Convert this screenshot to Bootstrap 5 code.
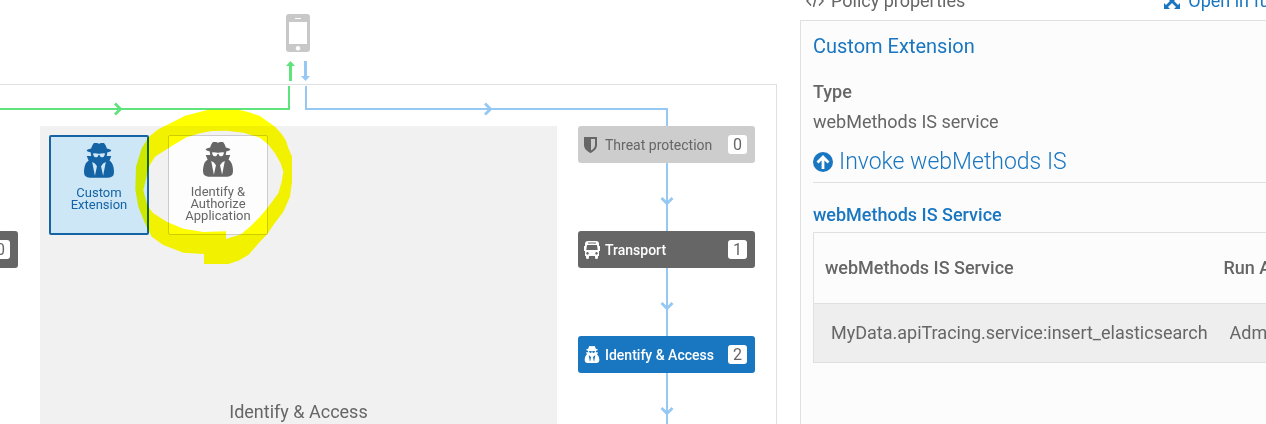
<!DOCTYPE html>
<html lang="en">
<head>
<meta charset="utf-8">
<meta name="viewport" content="width=device-width, initial-scale=1">
<title>Policy properties</title>
<link href="https://cdn.jsdelivr.net/npm/bootstrap@5.3.0/dist/css/bootstrap.min.css" rel="stylesheet">
<script src="https://cdn.jsdelivr.net/npm/bootstrap@5.3.0/dist/js/bootstrap.bundle.min.js"></script>
<style>
  :root { --ink: #666; --brand: #1976c1; --rule: #e0e0e0; --request: #95c8f2; --response: #5ee37d; }
  body { font-family: Roboto, "Liberation Sans", sans-serif; font-size: 18px; line-height: 24px; color: var(--ink); }
  a { color: var(--brand); text-decoration: none; }
  svg { display: block; flex-shrink: 0; }

  .client { flex: 0 0 84px; padding: 14px 221px 0 40px; gap: 9px; }
  .frame { border: solid var(--rule); border-width: 1px 1px 0 0; }
  .wires { display: grid; grid-template-columns: 40px 1fr 15px 1fr 111px 108px; height: 41px; padding-top: 1px; }
  .wire { height: 24px; position: relative; }
  .wire-response { grid-column: 1 / 3; margin-right: 1px; border: solid var(--response); border-width: 0 2px 2px 0; color: var(--response); }
  .wire-request { grid-column: 4 / 6; margin-left: -1px; border: solid var(--request); border-width: 0 0 2px 2px; color: var(--request); }
  .wire-head { position: absolute; bottom: -8px; left: 50%; transform: translateX(-50%); }
  .wire-response .wire-head { left: 41%; }
  .wire-drop { grid-column: 6; height: 18px; margin: 22px 0 0 -2px; border-left: 2px solid var(--request); }

  .lanes { padding-right: 21px; }
  .lane-left { width: 18px; margin-right: 22px; padding-top: 105px; }
  .stage { background: #f1f1f1; padding: 9px 9px 17px; margin-right: 21px; }
  .lane-right { width: 177px; }
  .step { height: 37px; width: 100%; border: 0; border-radius: 3px; padding: 0 8px 0 6px; font-size: 14px; line-height: 20px; font-weight: 500; color: #fff; background: var(--ink); }
  .step-idle { background: #cdcdcd; color: var(--ink); font-weight: 400; }
  .step-active { background: var(--brand); }
  .step-icon { width: 16px; margin-right: 5px; }
  .count { width: 19px; height: 19px; border-radius: 3px; background: #fff; color: var(--ink); font-size: 16px; line-height: 19px; font-weight: 400; text-align: center; flex-shrink: 0; }
  .link-down { height: 68px; width: 14px; color: var(--request); background: linear-gradient(var(--request), var(--request)) center / 2px 100% no-repeat; }

  .tile { width: 100px; height: 100px; padding: 6px 0 0; border: 1px solid #ccc; border-radius: 2px; background: #fdfdfd; color: var(--ink); font-size: 13px; line-height: 12px; gap: 9px; }
  .tile-on { border: 2px solid #1464a5; background: #cde7f7; color: #1464a5; }
  .tiles { gap: 19px; }
  .marker { position: absolute; left: -34px; top: -27px; mix-blend-mode: multiply; pointer-events: none; }

  .side { flex: 0 0 466px; margin-left: 23px; }
  .side-head { height: 20px; padding: 0 0 7px 6px; }
  .side-name { gap: 7px; }
  .side-link { margin-left: 199px; gap: 8px; }
  .props { background: #fcfcfc; border: solid var(--rule); border-width: 1px 0 0 1px; padding: 13px 0 0 12px; }
  .props-title { font-size: 20px; line-height: 24px; color: var(--brand); margin: 0 0 22px; font-weight: 400; }
  .props-label { font-weight: 500; margin-bottom: 6px; }
  .group-title { font-size: 23px; line-height: 32px; font-weight: 300; color: var(--brand); gap: 6px; padding-bottom: 4px; margin: 12px 0 20px; border-bottom: 1px solid var(--rule); }
  .sub-title { font-size: 18px; line-height: 24px; font-weight: 500; color: var(--brand); margin: 0 0 5px; }
  .svc { width: 580px; table-layout: fixed; border: 1px solid var(--rule); margin: 0; color: var(--ink); }
  .svc th { font-weight: 500; padding: 23px 11px; }
  .svc td { padding: 17px; border-top: 1px solid var(--rule); background: #eee; }
  .svc-name { width: 399px; }
</style>
</head>
<body class="vh-100 overflow-hidden d-flex">

<svg width="0" height="0" class="position-absolute" aria-hidden="true">
  <symbol id="agent" viewBox="0 0 1408 1640">
    <path fill="currentColor" d="M512 1536l96-448-96-128-128-64zm384 0l128-640-128 64-96 128zm96-1040q-2-4-4-6-10-8-96-8-70 0-167 19-7 2-21 2t-21-2q-97-19-167-19-86 0-96 8-2 2-4 6 2 18 4 27 2 3 7.500 6.500t7.500 10.500q2 4 7.500 20.500t7 20.500 7.500 17 8.500 17 9 14 12 13.500 14 9.500 17.500 8 20.500 4 24.500 2q36 0 59-12.500t32.500-30 14.500-34.500 11.500-29.500 17.500-12.500h12q11 0 17.500 12.500t11.500 29.500 14.500 34.500 32.500 30 59 12.500q13 0 24.500-2t20.500-4 17.500-8 14-9.500 12-13.500 9-14 8.500-17 7.500-17 7-20.500 7.500-20.500q2-7 7.500-10.500t7.500-6.500q2-9 4-27zm416 879q0 121-73 190t-194 69h-874q-121 0-194-69t-73-190q0-61 4.500-118t19-125.500 37.500-123.500 63.500-103.500 93.500-74.500l-90-220h214q-22-64-22-128 0-12 2-32-194-40-194-96 0-57 210-99 17-62 51.500-134t70.500-114q32-37 76-37 30 0 84 31t84 31 84-31 84-31q44 0 76 37 36 42 70.500 114t51.500 134q210 42 210 99 0 56-194 96 7 81-20 160h214l-82 225q63 33 107.500 96.500t65.500 143.500 29 151.500 8 148.500z"/>
  </symbol>
  <symbol id="chevron-down" viewBox="0 0 14 10">
    <path d="M1.500 2L7 7.500L12.500 2" fill="none" stroke="currentColor" stroke-width="2.800"/>
  </symbol>
  <symbol id="chevron-right" viewBox="0 0 10 14">
    <path d="M2 1.500L7.500 7L2 12.500" fill="none" stroke="currentColor" stroke-width="2.800"/>
  </symbol>
</svg>

<main class="flex-fill d-flex flex-column">
  <div class="client d-flex flex-column align-items-center">
    <svg width="24" height="38" viewBox="0 0 24 38" aria-label="Client">
      <path fill="#c8c8c8" fill-rule="evenodd" d="M3 0h18a3 3 0 0 1 3 3v32a3 3 0 0 1-3 3H3a3 3 0 0 1-3-3V3a3 3 0 0 1 3-3zM3 8v22h18V8zM9 4v1h6V4zM12 32a2.300 2.300 0 1 0 .01 0z"/>
    </svg>
    <svg width="24" height="20" viewBox="0 0 24 20" aria-hidden="true">
      <path fill="#5ee37d" d="M4.500 0L9 5H6v15H3V5H0z"/>
      <path fill="#95c8f2" d="M18 0h3v15h3l-4.500 5L15 15h3z"/>
    </svg>
  </div>

  <section class="frame flex-fill d-flex flex-column">
    <div class="wires">
      <div class="wire wire-response"><svg class="wire-head" width="10" height="14"><use href="#chevron-right"/></svg></div>
      <div class="wire wire-request"><svg class="wire-head" width="10" height="14"><use href="#chevron-right"/></svg></div>
      <div class="wire-drop"></div>
    </div>

    <div class="lanes flex-fill d-flex">
      <div class="lane-left">
        <button type="button" class="step d-flex align-items-center justify-content-end rounded-start-0 overflow-hidden"><span class="count">0</span></button>
      </div>

      <div class="stage flex-fill d-flex flex-column justify-content-between">
        <div class="tiles d-flex">
          <button type="button" class="tile tile-on d-flex flex-column align-items-center">
            <svg width="30" height="35" aria-hidden="true"><use href="#agent"/></svg>
            <span>Custom<br>Extension</span>
          </button>
          <div class="position-relative">
            <button type="button" class="tile d-flex flex-column align-items-center">
              <svg width="30" height="35" aria-hidden="true"><use href="#agent"/></svg>
              <span>Identify &amp;<br>Authorize<br>Application</span>
            </button>
            <svg class="marker" width="160" height="158" viewBox="312 24 480 474" aria-hidden="true">
              <path fill="#ff0" fill-rule="evenodd" d="M357 110L385 88L430 65L465 47L500 38L535 29H625L655 36L690 48L735 80L755 102L768 122L774 142L786 170V245L780 290L760 335L730 375L712 402L690 425L655 465L625 482L595 492H522V462L460 458L400 435L365 410L345 370L325 320L316 270L318 200L335 145zM375 170L430 135L470 112L510 100L545 93L590 92L640 98L690 113L715 134L735 160L752 190L760 215L755 245L745 280L715 320L690 350L660 380L633 403L588 417V394L520 396L460 386L410 365L370 340L355 322L345 290L340 270L350 230L356 200z"/>
            </svg>
          </div>
        </div>
        <div class="text-center">Identify &amp; Access</div>
      </div>

      <div class="lane-right d-flex flex-column align-items-center">
        <button type="button" class="step step-idle d-flex align-items-center">
          <svg class="step-icon" height="16" viewBox="0 0 16 16" aria-hidden="true"><path fill="currentColor" fill-rule="evenodd" d="M0 0h13v8c0 4-3.500 6.500-6.500 8C3.500 14.500 0 12 0 8zM7 2v11.500c2-1.200 4-3 4-5.500V2z"/></svg>
          <span>Threat protection</span><span class="count ms-auto">0</span>
        </button>
        <div class="link-down d-flex flex-column justify-content-center pt-2"><svg width="14" height="10"><use href="#chevron-down"/></svg></div>
        <button type="button" class="step d-flex align-items-center">
          <svg class="step-icon" height="18" viewBox="0 0 16 18" aria-hidden="true"><path fill="currentColor" fill-rule="evenodd" d="M4 0h8q3 0 3 3v2h1v5h-1v5h-1v1.500q0 1.500-1.500 1.500T11 16.500V15H5v1.500Q5 18 3.500 18T2 16.500V15H1v-5H0V5h1V3Q1 0 4 0zM4 1.500V2.500h8v-1zM3 4L2.300 9h11.400L13 4zM3.500 11a1.300 1.300 0 1 0 .01 0zM12.500 11a1.300 1.300 0 1 0 .01 0z"/></svg>
          <span>Transport</span><span class="count ms-auto">1</span>
        </button>
        <div class="link-down d-flex flex-column justify-content-center pt-2"><svg width="14" height="10"><use href="#chevron-down"/></svg></div>
        <button type="button" class="step step-active d-flex align-items-center">
          <svg class="step-icon" height="17" aria-hidden="true"><use href="#agent"/></svg>
          <span>Identify &amp; Access</span><span class="count ms-auto">2</span>
        </button>
        <div class="link-down d-flex flex-column justify-content-center pt-2"><svg width="14" height="10"><use href="#chevron-down"/></svg></div>
      </div>
    </div>
  </section>
</main>

<aside class="side d-flex flex-column overflow-hidden">
  <div class="side-head d-flex align-items-end overflow-hidden text-nowrap">
    <div class="side-name d-flex align-items-center">
      <svg width="18" height="12" viewBox="0 0 18 12" aria-hidden="true"><path fill="none" stroke="currentColor" stroke-width="1.500" d="M5 1.500L1 6l4 4.500M13 1.500L17 6l-4 4.500M10.500 0L7.500 12"/></svg>
      <span>Policy properties</span>
    </div>
    <a href="#" class="side-link d-flex align-items-center">
      <svg width="16" height="16" viewBox="0 0 16 16" aria-hidden="true"><path fill="currentColor" d="M0 0h6L4 2l4 4 4-4-2-2h6v6l-2-2-4 4 4 4 2-2v6h-6l2-2-4-4-4 4 2 2H0v-6l2 2 4-4-4-4-2 2z"/></svg>
      <span>Open in full screen</span>
    </a>
  </div>

  <div class="props flex-fill">
    <h2 class="props-title">Custom Extension</h2>
    <div class="props-label">Type</div>
    <div>webMethods IS service</div>
    <h3 class="group-title d-flex align-items-center">
      <svg width="20" height="20" viewBox="0 0 20 20" aria-hidden="true"><circle cx="10" cy="10" r="10" fill="currentColor"/><path fill="none" stroke="#fff" stroke-width="2.800" d="M10 17V5M4.500 10.500L10 5l5.500 5.500"/></svg>
      <span>Invoke webMethods IS</span>
    </h3>
    <h4 class="sub-title">webMethods IS Service</h4>
    <table class="svc">
      <thead><tr><th class="svc-name" scope="col">webMethods IS Service</th><th scope="col">Run As User</th></tr></thead>
      <tbody><tr><td>MyData.apiTracing.service:insert_elasticsearch</td><td>Administrator</td></tr></tbody>
    </table>
  </div>
</aside>
</body>
</html>
